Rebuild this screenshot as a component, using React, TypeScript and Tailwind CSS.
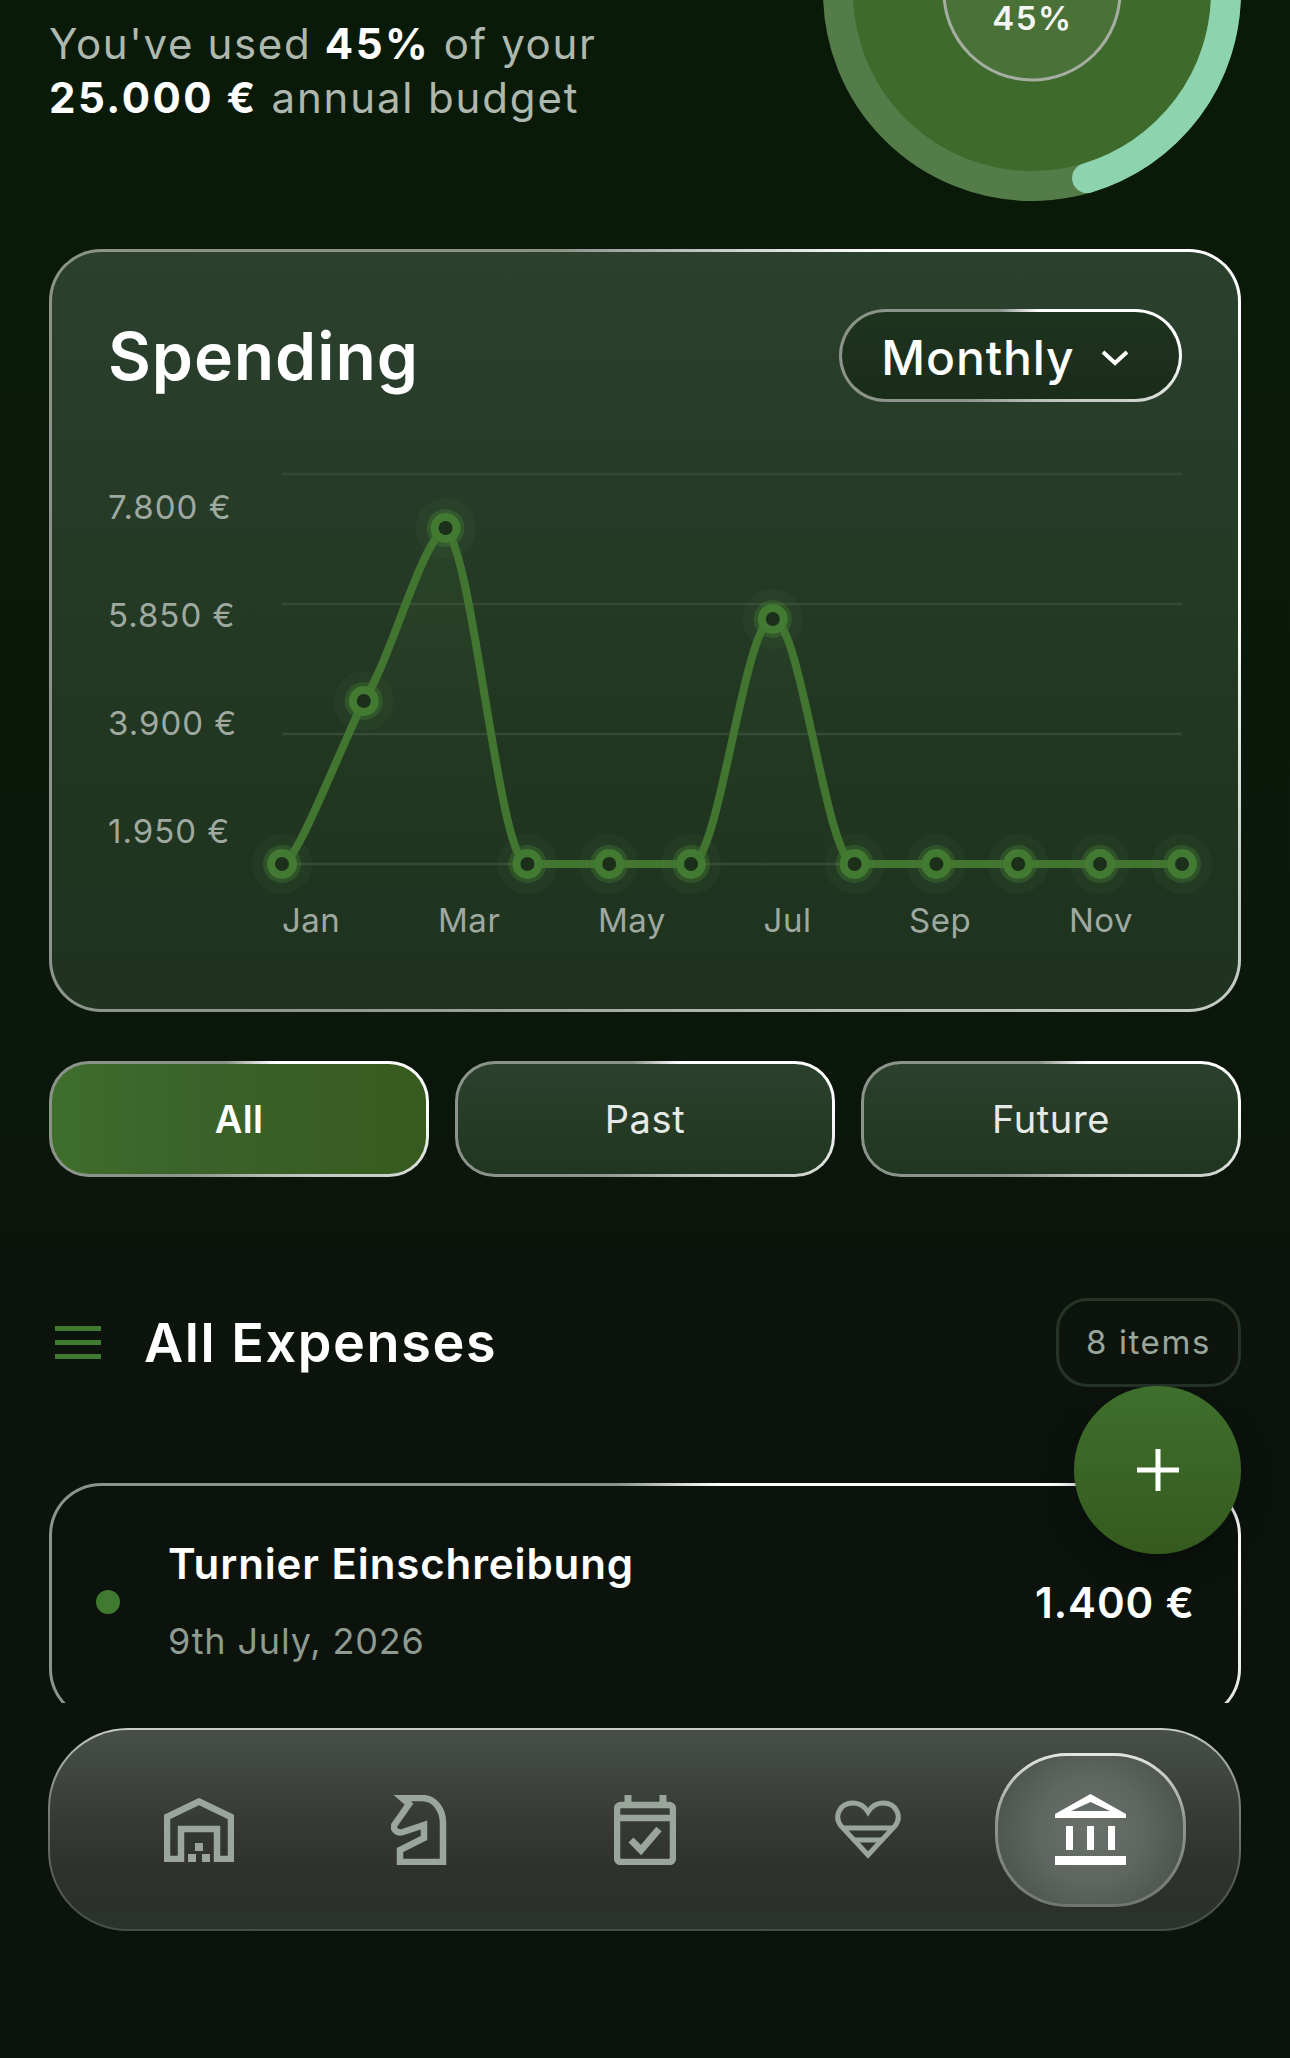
import React from "react";

const BORDER =
  "bg-[conic-gradient(from_-13deg_at_50%_50%,#8a928a_0deg,#fff_46deg,#fff_100deg,#c9cec9_125deg,#aab1aa_190deg,#8c948c_240deg,#8a928a_360deg)]";

const pts: [number, number][] = [
  [0, 390], [81.8, 227], [163.6, 54], [245.4, 390], [327.2, 390], [409, 390],
  [490.8, 145], [572.6, 390], [654.4, 390], [736.2, 390], [818, 390], [900, 390],
];

function buildPath(): string {
  const s = 0.35;
  const tangents = pts.map((p, i) => {
    const prev = pts[i - 1] ?? p;
    const next = pts[i + 1] ?? p;
    const tx = ((next[0] - prev[0]) / 2) * s;
    let ty = ((next[1] - prev[1]) / 2) * s;
    if (Math.abs(next[1] - p[1]) <= 10 || Math.abs(p[1] - prev[1]) <= 10) ty = 0;
    return [tx, ty];
  });
  let d = `M${pts[0][0]} ${pts[0][1]}`;
  for (let i = 1; i < pts.length; i++) {
    const a = pts[i - 1];
    const b = pts[i];
    if (i === 2) {
      d += ` C110.4 182 138 70 ${b[0]} ${b[1]}`;
    } else {
      d += ` C${a[0] + tangents[i - 1][0]} ${a[1] + tangents[i - 1][1]} ${b[0] - tangents[i][0]} ${b[1] - tangents[i][1]} ${b[0]} ${b[1]}`;
    }
  }
  return d;
}

function Donut() {
  const r = 194;
  const c = 2 * Math.PI * r;
  return (
    <div className="relative w-[418px] h-[418px] -mt-[217px] shrink-0">
      <svg width="418" height="418" viewBox="0 0 418 418" className="block">
        <circle cx="209" cy="209" r="180" fill="#3e6a2b" />
        <circle cx="209" cy="209" r={r} fill="none" stroke="#547c48" strokeWidth="30" />
        <circle
          cx="209"
          cy="209"
          r={r}
          fill="none"
          stroke="#8dd4ae"
          strokeWidth="30"
          strokeLinecap="round"
          strokeDasharray={`${c * 0.454} ${c}`}
          transform="rotate(-90 209 209)"
        />
        <circle cx="209" cy="209" r="88" fill="#4a7238" stroke="#a6aea4" strokeWidth="3" />
      </svg>
      <div className="absolute left-[1px] right-0 top-[218px] text-center text-[33px] leading-[34px] font-semibold tracking-[1.5px] text-[#f3f6f2]">
        45%
      </div>
    </div>
  );
}

function Chart() {
  const d = buildPath();
  const area = `${d} L900 390 L0 390 Z`;
  return (
    <svg width="900" height="390" viewBox="0 0 900 390" className="block overflow-visible">
      <defs>
        <linearGradient id="area" x1="0" y1="0" x2="0" y2="1">
          <stop offset="0" stopColor="#4f8f3a" stopOpacity="0.1" />
          <stop offset="0.55" stopColor="#4f8f3a" stopOpacity="0.04" />
          <stop offset="1" stopColor="#4f8f3a" stopOpacity="0" />
        </linearGradient>
      </defs>
      {[0, 130, 260, 390].map((y) => (
        <line key={y} x1="0" x2="900" y1={y} y2={y} stroke="#354936" strokeWidth="2.5" />
      ))}
      <path d={area} fill="url(#area)" />
      {pts.map((p, i) => (
        <circle key={`h${i}`} cx={p[0]} cy={p[1]} r="30" fill="#4a7a44" fillOpacity="0.1" />
      ))}
      {pts.map((p, i) => (
        <circle key={`g${i}`} cx={p[0]} cy={p[1]} r="19" fill="#4c8a38" fillOpacity="0.3" />
      ))}
      <path d={d} fill="none" stroke="#417530" strokeWidth="8" strokeLinecap="round" />
      {pts.map((p, i) => (
        <circle key={`d${i}`} cx={p[0]} cy={p[1]} r="11" fill="#1c2f1b" stroke="#417a30" strokeWidth="8" />
      ))}
    </svg>
  );
}

function WarehouseIcon() {
  return (
    <svg width="70" height="64" viewBox="0 0 70 64" fill="none" stroke="#9aa69b" strokeWidth="6.5">
      <path d="M3 61V19L35 3.5L67 19V61H53V31H17V61Z" />
      <g fill="#9aa69b" stroke="none">
        <rect x="31" y="45" width="8" height="8" />
        <rect x="24" y="56" width="8" height="8" />
        <rect x="38" y="56" width="8" height="8" />
      </g>
    </svg>
  );
}

function KnightIcon() {
  return (
    <svg width="56" height="70" viewBox="0 0 56 70" fill="none" stroke="#9aa69b" strokeWidth="6.5">
      <path d="M11 3H31C44 3 52 15 52 28V67H9V55L33 43V30L12 37C5 39 1 33 4 29L18 9Z" />
    </svg>
  );
}

function CalendarIcon() {
  return (
    <svg width="62" height="70" viewBox="0 0 62 70" fill="none" stroke="#9aa69b" strokeWidth="6.5">
      <rect x="3" y="10" width="56" height="57" rx="4" />
      <path d="M3 23H59" />
      <path d="M14 0V10M49 0V10" strokeWidth="7" />
      <path d="M17 45L27 55L45 34" strokeWidth="7" />
    </svg>
  );
}

function HeartIcon() {
  return (
    <svg width="66" height="59" viewBox="0 0 66 59" fill="none" stroke="#9aa69b" strokeWidth="5">
      <path d="M33 55L6 26C-1 17 4 3 18 3C25 3 30 7 33 12C36 7 41 3 48 3C62 3 67 17 60 26Z" />
      <path d="M7 28H59M18 40H48" />
    </svg>
  );
}

function BankIcon() {
  return (
    <svg width="71" height="71" viewBox="0 0 71 71" fill="#ffffff">
      <path fillRule="evenodd" d="M35.5 0L71 20V24H0V20ZM35.5 8L16 17H55Z" />
      <rect x="11" y="32" width="7" height="24" />
      <rect x="32" y="32" width="7" height="24" />
      <rect x="53" y="32" width="7" height="24" />
      <rect x="0" y="62" width="71" height="9" />
    </svg>
  );
}

function FilterButton({ label, active }: { label: string; active?: boolean }) {
  return (
    <div className={`flex-1 h-[116px] rounded-[40px] p-[3px] ${BORDER}`}>
      <div
        className={
          active
            ? "h-full rounded-[37px] flex items-center justify-center bg-[linear-gradient(90deg,#3f6e2c_0%,#3a622a_40%,#375b1e_100%)] text-white font-semibold text-[38px] tracking-[0.4px]"
            : "h-full rounded-[37px] flex items-center justify-center bg-[linear-gradient(180deg,#2b412d_0%,#203620_100%)] text-[#e6eae6] font-normal text-[38px] tracking-[0.6px]"
        }
      >
        {label}
      </div>
    </div>
  );
}

export default function App() {
  return (
    <div
      className="w-[1290px] h-[2058px] overflow-hidden bg-[linear-gradient(180deg,#0a1a09_0%,#0a1a09_15%,#0b170b_50%,#0c130d_70%,#0c120c_100%)] text-white"
      style={{ fontFamily: "Inter, 'Liberation Sans', sans-serif" }}
    >
      <div className="h-[1703px] overflow-hidden relative px-[49px]">
        <div className="flex justify-between items-start">
          <div className="pt-[17px] text-[42px] leading-[54px] text-[#aeb8ae]">
            <div className="tracking-[1.65px]">
              You've used <span className="font-bold text-white tracking-[2.5px]">45%</span> of your
            </div>
            <div className="tracking-[1.85px]">
              <span className="font-bold text-white tracking-[2.5px]">25.000 €</span> annual budget
            </div>
          </div>
          <Donut />
        </div>

        <div className={`mt-[48px] h-[763px] rounded-[52px] p-[3px] ${BORDER}`}>
          <div className="h-full rounded-[49px] bg-[linear-gradient(180deg,#2b412d_0%,#273d29_25%,#203620_70%,#1f3320_100%)] px-[56px] pt-[57px]">
            <div className="flex justify-between items-center h-[93px]">
              <div className="text-[66px] leading-[80px] font-semibold tracking-[0.9px] text-white">Spending</div>
              <div className={`w-[343px] h-[93px] rounded-full p-[3px] ${BORDER}`}>
                <div className="h-full rounded-full bg-[linear-gradient(180deg,#1e341f_0%,#1a2c1a_100%)] flex items-center justify-center gap-[25px] pr-[10px] pt-[4px]">
                  <span className="text-[48px] leading-[56px] font-medium tracking-[0.9px] text-white">Monthly</span>
                  <svg width="30" height="16" viewBox="0 0 30 16" fill="none" stroke="#ffffff" strokeWidth="4">
                    <path d="M3 2L15 13L27 2" />
                  </svg>
                </div>
              </div>
            </div>

            <div className="flex mt-[72px]">
              <div className="w-[174px] shrink-0 pt-[13px] h-[390px] flex flex-col gap-[68px] text-[33px] leading-[40px] tracking-[1px] text-[#9fa9a0]">
                <div>7.800 €</div>
                <div>5.850 €</div>
                <div>3.900 €</div>
                <div>1.950 €</div>
              </div>
              <Chart />
            </div>

            <div className="flex justify-between pl-[174px] pr-[49px] mt-[36px] text-[33px] leading-[40px] tracking-[0.5px] text-[#9fa9a0]">
              <span>Jan</span>
              <span>Mar</span>
              <span>May</span>
              <span>Jul</span>
              <span>Sep</span>
              <span>Nov</span>
            </div>
          </div>
        </div>

        <div className="flex gap-[26px] mt-[49px]">
          <FilterButton label="All" active />
          <FilterButton label="Past" />
          <FilterButton label="Future" />
        </div>

        <div className="flex items-center justify-between mt-[121px] h-[89px]">
          <div className="flex items-center">
            <div className="ml-[6px] w-[46px] flex flex-col gap-[9px]">
              <div className="h-[5px] bg-[#3f7a30]" />
              <div className="h-[5px] bg-[#3f7a30]" />
              <div className="h-[5px] bg-[#3f7a30]" />
            </div>
            <div className="ml-[43px] text-[54px] leading-[64px] font-semibold tracking-[1.55px] text-white">All Expenses</div>
          </div>
          <div className="w-[185px] h-[89px] rounded-[32px] border-[3px] border-[#263428] flex items-center justify-center text-[33px] tracking-[1.6px] text-[#9aa59b]">
            8 items
          </div>
        </div>

        <div className={`mt-[96px] h-[238px] rounded-[52px] p-[3px] ${BORDER}`}>
          <div className="h-full rounded-[49px] bg-[#0c130d] flex items-center pl-[44px] pr-[43px]">
            <div className="w-[24px] h-[24px] rounded-full bg-[#3f7a30] shrink-0" />
            <div className="ml-[48px] flex-1 flex flex-col gap-[33px]">
              <div className="text-[42px] leading-[44px] font-semibold tracking-[0.9px] text-white">Turnier Einschreibung</div>
              <div className="text-[36px] leading-[44px] tracking-[0.85px] text-[#8f9a90]">9th July, 2026</div>
            </div>
            <div className="text-[42px] leading-[50px] pt-[2px] font-semibold tracking-[0.9px] text-white">1.400 €</div>
          </div>
        </div>

        <div className="absolute top-[1386px] left-[1074px] w-[167px] h-[168px] rounded-full bg-[linear-gradient(180deg,#3f6f2c_0%,#355a1e_100%)] flex items-center justify-center shadow-[0_10px_30px_rgba(0,0,0,0.35)]">
          <svg width="42" height="42" viewBox="0 0 42 42" fill="#ffffff">
            <rect x="18.5" y="0" width="5" height="42" />
            <rect x="0" y="18.5" width="42" height="5" />
          </svg>
        </div>
      </div>

      <div className="mt-[25px] mx-[48px] w-[1193px] h-[203px] rounded-[80px] p-[2px] bg-[linear-gradient(180deg,#c9cec9_0%,#7b817c_35%,#5a605b_70%,#454b46_100%)]">
        <div className="h-full rounded-[78px] bg-[linear-gradient(180deg,#484f49_0%,#3a3f3b_35%,#2e312e_70%,#2c302c_88%,#2b342c_100%)] px-[53px] flex items-center justify-between">
          <div className="w-[191px] h-[154px] flex items-center justify-center"><WarehouseIcon /></div>
          <div className="w-[191px] h-[154px] flex items-center justify-center pr-[6px]"><KnightIcon /></div>
          <div className="w-[191px] h-[154px] flex items-center justify-center"><CalendarIcon /></div>
          <div className="w-[191px] h-[154px] flex items-center justify-center"><HeartIcon /></div>
          <div className="w-[191px] h-[154px] rounded-[72px] p-[3px] bg-[linear-gradient(180deg,#e3e7e3_0%,#8f958f_45%,#6f756f_100%)]">
            <div className="h-full rounded-[69px] flex items-center justify-center bg-[radial-gradient(circle_at_50%_50%,#6a716b_0%,#5f6661_45%,#454b46_100%)]">
              <BankIcon />
            </div>
          </div>
        </div>
      </div>
    </div>
  );
}
